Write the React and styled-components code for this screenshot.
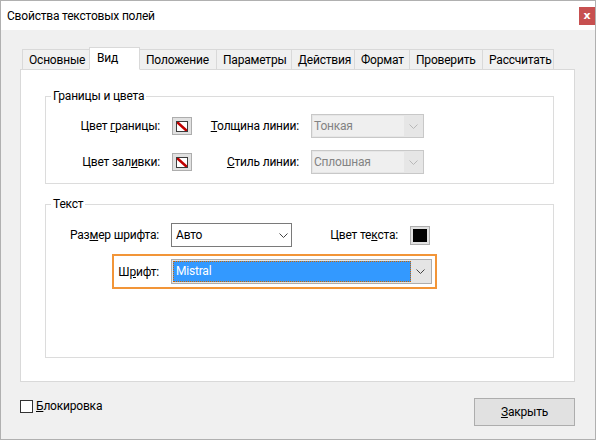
import React from "react";
import styled, { createGlobalStyle } from "styled-components";

const Global = createGlobalStyle`
  html, body { margin: 0; padding: 0; background: #ffffff; }
  body {
    font-family: "Segoe UI", Roboto, "Noto Sans", sans-serif;
    font-size: 12px;
    letter-spacing: -0.2px;
    color: #000;
  }
  * { box-sizing: border-box; }
`;

const Window = styled.div`
  width: 596px;
  height: 440px;
  border: 1px solid #b0b0b0;
  background: #f0f0f0;
  display: flex;
  flex-direction: column;
`;

const TitleBar = styled.div`
  height: 29px;
  flex: none;
  background: #ffffff;
  display: flex;
  align-items: center;
  justify-content: space-between;
  padding-left: 6px;
`;

const Title = styled.span`
  line-height: 16px;
`;

const CloseButton = styled.div`
  width: 16px;
  height: 18px;
  background: #c75050;
  color: #ffffff;
  font-weight: bold;
  font-size: 11px;
  line-height: 17px;
  text-align: center;
  letter-spacing: 0;
  font-family: "DejaVu Sans", sans-serif;
`;

const Body = styled.div`
  flex: 1;
  padding: 17px 20px 0 19px;
  display: flex;
  flex-direction: column;
`;

const TabStrip = styled.div`
  display: flex;
  align-items: flex-end;
  height: 23px;
  padding-left: 2px;
  margin-bottom: -1px;
  position: relative;
  z-index: 1;
`;

const Tab = styled.div`
  position: relative;
  z-index: ${(p) => (p.$active ? 2 : 1)};
  width: ${(p) => p.$w}px;
  height: ${(p) => (p.$active ? 23 : 21)}px;
  margin-left: ${(p) => (p.$first ? 0 : p.$active ? -3 : -1)}px;
  border: 1px solid #d9d9d9;
  border-bottom-color: ${(p) => (p.$active ? "#ffffff" : "#d9d9d9")};
  background: ${(p) => (p.$active ? "#ffffff" : "#f0f0f0")};
  padding: 2px 0 0 ${(p) => (p.$active ? 7 : 6)}px;
  line-height: 16px;
  white-space: nowrap;
`;

const Panel = styled.div`
  width: 555px;
  height: 313px;
  background: #ffffff;
  border: 1px solid #d9d9d9;
  padding: 18px 0 0 24px;
`;

const Group = styled.fieldset`
  margin: ${(p) => p.$mt || 0}px 0 0 0;
  width: 509px;
  height: ${(p) => p.$h}px;
  min-width: 0;
  border: 1px solid #dcdcdc;
  padding: ${(p) => p.$pt}px 0 0 16px;
`;

const Legend = styled.legend`
  margin-left: -11px;
  padding: 0 2px;
  line-height: 16px;
`;

const Key = styled.u`
  text-decoration: underline;
`;

const BorderGrid = styled.div`
  display: grid;
  grid-template-columns: 98px 20px 95px 113px;
  grid-auto-rows: 24px;
  column-gap: 12px;
  row-gap: 12px;
  align-items: center;
`;

const Label = styled.span`
  text-align: right;
  justify-self: end;
  white-space: nowrap;
  line-height: 16px;
`;

const SwatchBox = styled.div`
  width: 20px;
  height: 18px;
  border: 1px solid #adadad;
  background: #e1e1e1;
  display: flex;
  align-items: center;
  justify-content: center;
`;

const NoColor = styled.div`
  width: 12px;
  height: 11px;
  border: 1px solid #3c3c3c;
  background: #ffffff;
  display: flex;
`;

const TextColorBox = styled.div`
  width: 20px;
  height: 19px;
  border: 1px solid #adadad;
  background: #e1e1e1;
  padding: 2px;
`;

const Black = styled.div`
  width: 100%;
  height: 100%;
  background: #000000;
`;

const DisabledSelect = styled.div`
  width: 113px;
  height: 24px;
  border: 1px solid #c8c8c8;
  background: #e6e6e6;
  padding: 1px;
  display: flex;
`;

const DisabledValue = styled.div`
  width: 91px;
  background: #efefef;
  color: #838383;
  padding-left: 1px;
  line-height: 20px;
`;

const ArrowArea = styled.div`
  flex: 1;
  display: flex;
  align-items: center;
  justify-content: center;
`;

const TextRow = styled.div`
  display: grid;
  grid-template-columns: 97px 121px 1fr 20px;
  column-gap: 12px;
  width: 368px;
  height: 24px;
  align-items: center;
`;

const Select = styled.div`
  width: 121px;
  height: 24px;
  border: 1px solid #7a7a7a;
  background: #ffffff;
  display: flex;
  align-items: center;
  justify-content: space-between;
  padding: 0 3px 0 4px;
  line-height: 16px;
`;

const Highlight = styled.div`
  margin: 7px 0 0 50px;
  width: 325px;
  height: 35px;
  border: 2px solid #f29538;
  padding: 3px 3px 3px 0;
  display: grid;
  grid-template-columns: 45px 261px;
  column-gap: 12px;
  align-items: center;
`;

const FontSelect = styled.div`
  width: 261px;
  height: 25px;
  border: 1px solid #adadad;
  background: #e5e5e5;
  padding: 1px;
  display: flex;
`;

const FontValue = styled.div`
  width: 238px;
  background: #3399ff;
  border: 1px dotted #cc6600;
  color: #ffffff;
  padding-left: 2px;
  line-height: 19px;
`;

const Footer = styled.div`
  margin-top: 16px;
  display: flex;
  justify-content: space-between;
  align-items: flex-start;
`;

const CheckRow = styled.label`
  display: flex;
  align-items: center;
  gap: 3px;
  line-height: 16px;
`;

const CheckBox = styled.span`
  width: 13px;
  height: 13px;
  border: 1px solid #333333;
  background: #ffffff;
`;

const Button = styled.div`
  width: 101px;
  height: 28px;
  border: 1px solid #adadad;
  background: #e1e1e1;
  display: flex;
  align-items: center;
  justify-content: center;
  line-height: 16px;
`;

const Chevron = ({ color }) => (
  <svg width="9" height="5" viewBox="0 0 9 5">
    <polyline points="0.5,0.5 4.5,4.5 8.5,0.5" fill="none" stroke={color} strokeWidth="1" />
  </svg>
);

const NoColorSwatch = () => (
  <SwatchBox>
    <NoColor>
      <svg width="10" height="9" viewBox="0 0 10 9">
        <line x1="0" y1="0" x2="10" y2="9" stroke="#c00000" strokeWidth="2.6" />
      </svg>
    </NoColor>
  </SwatchBox>
);

const tabs = [
  { label: "Основные", w: 70 },
  { label: "Вид", w: 51, active: true },
  { label: "Положение", w: 78 },
  { label: "Параметры", w: 76 },
  { label: "Действия", w: 64 },
  { label: "Формат", w: 56 },
  { label: "Проверить", w: 74 },
  { label: "Рассчитать", w: 72 },
];

export default function App() {
  return (
    <>
      <Global />
      <Window>
        <TitleBar>
          <Title>Свойства текстовых полей</Title>
          <CloseButton>x</CloseButton>
        </TitleBar>
        <Body>
          <TabStrip>
            {tabs.map((t, i) => (
              <Tab key={t.label} $w={t.w} $active={t.active} $first={i === 0}>
                {t.label}
              </Tab>
            ))}
          </TabStrip>
          <Panel>
            <Group $h={96} $pt={10}>
              <Legend>Границы и цвета</Legend>
              <BorderGrid>
                <Label>
                  Цвет <Key>г</Key>раницы:
                </Label>
                <NoColorSwatch />
                <Label>
                  <Key>Т</Key>олщина линии:
                </Label>
                <DisabledSelect>
                  <DisabledValue>Тонкая</DisabledValue>
                  <ArrowArea>
                    <Chevron color="#b8b8b8" />
                  </ArrowArea>
                </DisabledSelect>
                <Label>
                  Цвет зал<Key>и</Key>вки:
                </Label>
                <NoColorSwatch />
                <Label>
                  <Key>С</Key>тиль линии:
                </Label>
                <DisabledSelect>
                  <DisabledValue>Сплошная</DisabledValue>
                  <ArrowArea>
                    <Chevron color="#b8b8b8" />
                  </ArrowArea>
                </DisabledSelect>
              </BorderGrid>
            </Group>
            <Group $h={162} $pt={11} $mt={12}>
              <Legend>Текст</Legend>
              <TextRow>
                <Label>
                  Раз<Key>м</Key>ер шрифта:
                </Label>
                <Select>
                  <span>Авто</span>
                  <Chevron color="#444444" />
                </Select>
                <Label>
                  Цвет те<Key>к</Key>ста:
                </Label>
                <TextColorBox>
                  <Black />
                </TextColorBox>
              </TextRow>
              <Highlight>
                <Label>
                  Ш<Key>р</Key>ифт:
                </Label>
                <FontSelect>
                  <FontValue>Mistral</FontValue>
                  <ArrowArea>
                    <Chevron color="#444444" />
                  </ArrowArea>
                </FontSelect>
              </Highlight>
            </Group>
          </Panel>
          <Footer>
            <CheckRow>
              <CheckBox />
              <span>
                <Key>Б</Key>локировка
              </span>
            </CheckRow>
            <Button>
              <span>
                <Key>З</Key>акрыть
              </span>
            </Button>
          </Footer>
        </Body>
      </Window>
    </>
  );
}
